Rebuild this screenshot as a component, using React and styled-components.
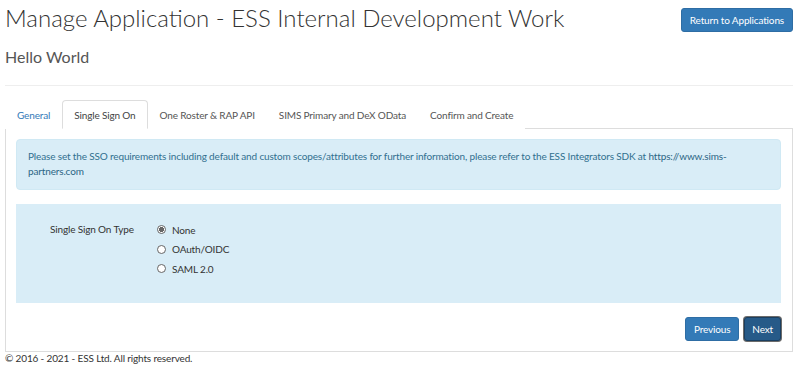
import styled, { createGlobalStyle } from 'styled-components';

const GlobalStyle = createGlobalStyle`
  html, body {
    margin: 0;
    padding: 0;
    background: #fff;
  }
  body {
    font-family: Lato, 'Open Sans', sans-serif;
    font-size: 10px;
    letter-spacing: -0.15px;
    color: #333;
  }
  * {
    box-sizing: border-box;
  }
`;

const tabs = ['General', 'Single Sign On', 'One Roster & RAP API', 'SIMS Primary and DeX OData', 'Confirm and Create'];
const ssoTypes = ['None', 'OAuth/OIDC', 'SAML 2.0'];

const App = () => {
  return (
    <>
      <GlobalStyle />
      <StPage>
        <StHeader>
          <StTitle>Manage Application - ESS Internal Development Work</StTitle>
          <StButton $variant='primary'>Return to Applications</StButton>
        </StHeader>
        <StSubTitle>Hello World</StSubTitle>
        <StRule />

        <StTabList>
          {tabs.map((tab, i) => (
            <StTab key={tab} $active={i === 1} $link={i === 0}>
              {tab}
            </StTab>
          ))}
        </StTabList>

        <StPanel>
          <StAlert>
            Please set the SSO requirements including default and custom scopes/attributes for further information,
            please refer to the ESS Integrators SDK at <StLink>https://www.sims-partners.com</StLink>
          </StAlert>

          <StFormBox>
            <StFormLabel>Single Sign On Type</StFormLabel>
            <StRadioList>
              {ssoTypes.map((type, i) => (
                <StRadioRow key={type}>
                  <StRadio $checked={i === 0} />
                  {type}
                </StRadioRow>
              ))}
            </StRadioList>
          </StFormBox>

          <StActions>
            <StButton $variant='primary'>Previous</StButton>
            <StButton $variant='focused'>Next</StButton>
          </StActions>
        </StPanel>

        <StFooter>© 2016 - 2021 - ESS Ltd. All rights reserved.</StFooter>
      </StPage>
    </>
  );
};

export default App;

const StPage = styled.div`
  width: 800px;
  padding: 0 7px 0 5px;
`;

const StHeader = styled.div`
  display: flex;
  justify-content: space-between;
  align-items: flex-start;
`;

const StTitle = styled.h1`
  margin: 0;
  font-size: 24px;
  font-weight: 300;
  letter-spacing: 0;
  line-height: 36px;
  color: #333;
`;

const StSubTitle = styled.h2`
  margin: 10px 0 0;
  font-size: 16px;
  font-weight: 400;
  letter-spacing: 0;
  line-height: 22px;
  color: #555;
`;

const StRule = styled.hr`
  margin: 17px 0 0;
  border: 0;
  border-top: 1px solid #eee;
`;

const StTabList = styled.div`
  display: flex;
  margin-top: 14px;
  border-bottom: 1px solid #ddd;
`;

const StTab = styled.div`
  margin-bottom: -1px;
  padding: 0 11px;
  height: 29px;
  line-height: 29px;
  color: ${({ $active, $link }) => ($link ? '#337ab7' : $active ? '#444' : '#555')};
  border: 1px solid ${({ $active }) => ($active ? '#ddd' : 'transparent')};
  border-bottom-color: ${({ $active }) => ($active ? '#fff' : 'transparent')};
  border-radius: 4px 4px 0 0;
  background: #fff;
`;

const StPanel = styled.div`
  border: 1px solid #ddd;
  border-top: 0;
  padding: 10px 11px 10px 10px;
`;

const StAlert = styled.div`
  padding: 9px 11px;
  min-height: 51px;
  line-height: 15px;
  color: #31708f;
  background: #d9edf7;
  border: 1px solid #d0e9f4;
  border-radius: 4px;
`;

const StLink = styled.span`
  color: #2b6584;
`;

const StFormBox = styled.div`
  display: flex;
  margin-top: 14px;
  height: 99px;
  padding: 16px 0 0 34px;
  background: #d9edf7;
`;

const StFormLabel = styled.div`
  width: 107px;
  line-height: 19px;
  color: #333;
`;

const StRadioList = styled.div`
  display: flex;
  flex-direction: column;
`;

const StRadioRow = styled.div`
  display: flex;
  align-items: center;
  gap: 6px;
  height: 19.5px;
  color: #333;
`;

const StRadio = styled.span`
  width: 9px;
  height: 9px;
  border-radius: 50%;
  border: 1px solid #666;
  background: ${({ $checked }) => ($checked ? 'radial-gradient(circle, #666 0 2.3px, #fff 2.8px)' : '#fff')};
`;

const StActions = styled.div`
  display: flex;
  justify-content: flex-end;
  gap: 5px;
  margin-top: 14px;
`;

const StButton = styled.button`
  height: 24px;
  padding: 0 ${({ $variant }) => ($variant === 'focused' ? '7px' : '8px')};
  font-family: inherit;
  font-size: 10px;
  letter-spacing: -0.15px;
  color: #fff;
  background: ${({ $variant }) => ($variant === 'focused' ? '#265a88' : '#337ab7')};
  border: 1px solid ${({ $variant }) => ($variant === 'focused' ? '#1b3f60' : '#2e6da4')};
  border-radius: 3px;
  box-shadow: ${({ $variant }) => ($variant === 'focused' ? '0 0 0 1px #6b6b6b' : 'none')};
  white-space: nowrap;

  ${StHeader} & {
    margin-top: 8px;
  }
`;

const StFooter = styled.div`
  line-height: 13px;
  color: #333;
`;
